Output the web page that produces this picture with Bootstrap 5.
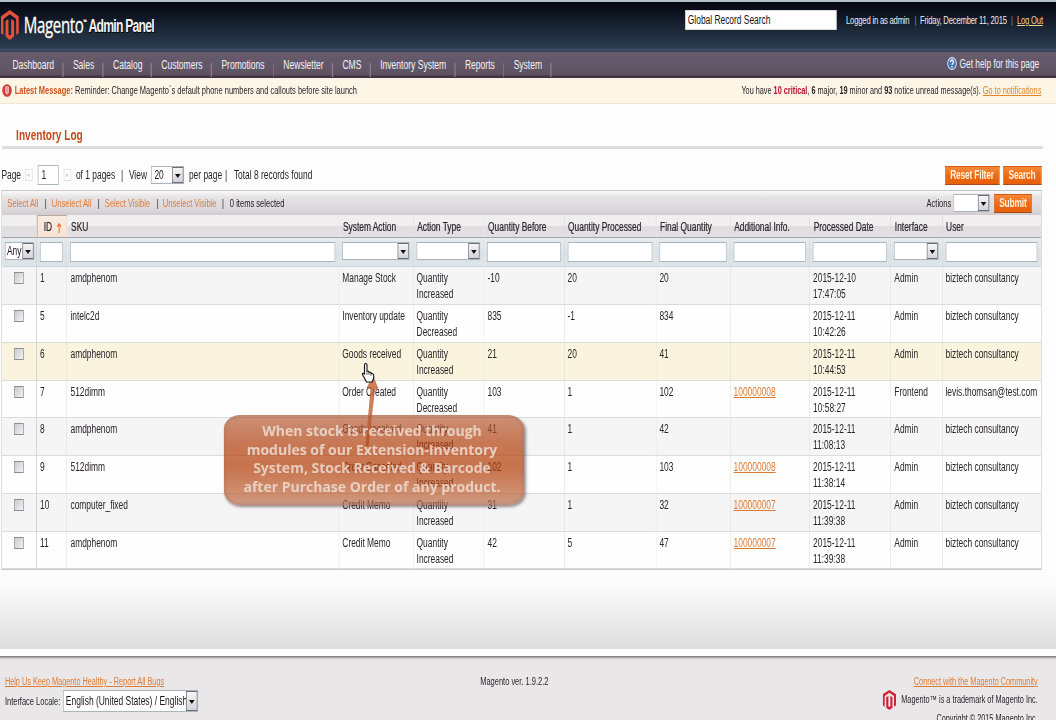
<!DOCTYPE html>
<html lang="en">
<head>
<meta charset="utf-8">
<title>Inventory Log / Magento Admin</title>
<link href="https://cdn.jsdelivr.net/npm/bootstrap@5.3.0/dist/css/bootstrap.min.css" rel="stylesheet">
<style>
body{margin:0;background:#fdfdfd;overflow:hidden}
.stage{width:1056px;height:720px;overflow:hidden}
/* the admin pages are laid out wide and shown condensed */
.squeeze{width:1508.6px;height:720px;transform:scaleX(.7);transform-origin:0 0;font:12px/16.5px "Liberation Sans",Arial,sans-serif;color:#2b2429;white-space:nowrap;overflow:hidden}
.squeeze a{color:#dc7a33}
.top-band{height:52px;background:linear-gradient(#b4c0cb 0 1.5px,#060812 2px,#0b101c 12px,#1a2635 28px,#2b3b50 48px,#47566a 50px,#25324a 51px,#56566a 52px);color:#eee}
.brand-mark{width:26px;height:30px;margin:2px 0 0 1px}
.brand-name{font:21.5px/26px "Open Sans",sans-serif;color:#fff;margin-left:7px;letter-spacing:-.5px;-webkit-text-stroke:.3px #fff}
.brand-sub{font:bold 17.5px/26px "Liberation Sans",sans-serif;color:#f2f2f4;letter-spacing:-1.15px;margin-left:3px;padding-top:1px;text-shadow:1px 1px #000}
.global-box{width:216px;height:20px;background:#fff;color:#161218;border:1px solid #d8d8d8;line-height:18px;padding-left:3px;margin-right:14px}
.session{font-size:11px;letter-spacing:-.3px;width:300px}
.session a{color:#f0cf90}
.menu-band{height:26px;background:linear-gradient(#655b6b,#62586a 50%,#5f505e 88%,#3f3440 94%,#3f3440);color:#f4f2f5;font-size:12.2px;padding-left:4px}
.menu-band .entry{padding:0 13.2px 0 13.7px;position:relative;line-height:26px}
.menu-band .entry::after{content:"";position:absolute;right:0;top:11px;bottom:1px;width:1.4px;background:#857a88}
.note-band{height:26px;background:#fdf5e6;border-bottom:1.5px solid #efe8d6;font-size:10.7px;padding:0 21px 0 0}
.note-band b.hot{color:#cf5420}
.page-title{font:bold 14.4px/20px "Liberation Sans",sans-serif;color:#c44a1c;margin:21px 0 0 23px}
.rule{height:3.2px;background:#dcdcdc;margin:1px 20px 0 3px}
.pager{height:22px;margin-top:15px;padding-right:21px}
.pager-grid{display:grid;grid-template-columns:33.6px 18.6px 54.3px 64.3px 11.4px 31.4px 54.3px 51.4px 12.9px auto;align-items:center;padding-left:2px;line-height:20px}
.step-btn{flex:none;width:11px;height:12px;border:1px solid #e2e2e2;color:#ccc;font-size:7px;line-height:10px;text-align:center}
.field{background:#fff;border:1.2px solid #a9b5bb;height:20px}
.pick{background:#fff;border:1px solid #aab4bc;height:18px;display:flex;align-items:stretch;justify-content:space-between;color:#1d171d}
.pick i{flex:none;margin-left:auto;width:16px;border:1.3px solid #6c6c76;background:linear-gradient(#f7f7f9,#d2d2d8);display:flex;align-items:center;justify-content:center}
.pick i::after{content:"";border:4px solid transparent;border-top:4.5px solid #111;border-bottom:0;margin-top:2px}
.pick span{min-width:0;overflow:hidden}
.act{background:linear-gradient(#f58a3c,#ee6c14 45%,#e75f09);border:1px solid #d9590f;border-bottom-color:#a84a18;color:#fff1e0;font-weight:bold;height:19px;line-height:17px;text-align:center;letter-spacing:-.25px}
.grid-box{margin:4px 21px 0 2px;width:1486px}
.mass{height:25px;border:1px solid #c9c9c9;border-width:1px 1.4px 0;background:linear-gradient(#fafafa,#e6e3e5 25%,#dad6d9 80%,#cfcbce);font-size:10.8px}
.mass-grid{display:grid;grid-template-columns:53.6px 10px 65.7px 10px 74.3px 8.6px 84.3px 11.4px auto;padding-left:7.5px;color:#1d171d}
.mass a{text-decoration:none;color:#e07a38}
.log{table-layout:fixed;width:100%;border-collapse:separate;border-spacing:0;border:1.4px solid #c6c9cc;border-width:0 1.4px 1.4px}
.log th,.log td{padding:0 0 0 4.2px;vertical-align:top;border-right:1.4px solid #dfe0e2;overflow:hidden}
.log th:last-child,.log td:last-child{border-right:0}
.log th{height:23px;font-weight:normal;-webkit-text-stroke:.2px #2b2429;padding:4px 0 0 5px;background:linear-gradient(#f1eff0,#f0eeef 48%,#dfdddf 50%,#e2e0e2);border-right-color:#d2d0d3;border-bottom:1.5px solid #a5a3a8}
.log th.sorted{background:linear-gradient(#f9ebe0,#f8e3d4);border-left:1.4px solid #b8a8a0;border-top:1px solid #b8a8a0;padding-top:3px}
.log .filters td{height:29px;background:linear-gradient(#e6ebee,#dbe2e6 60%,#dde5e8);border-right-color:#c8d0d4;border-bottom:1px solid #cfd6d9;padding:4px 5px 0 4px}
.log .rec td{height:38px;padding-top:3px;border-bottom:1px solid #dadbdd;background:#fefefe;line-height:16px}
.log .rec:nth-child(even) td{background:#f5f5f5}
.log .rec:nth-child(4) td{background:#faf3dd}
.log .rec:nth-child(5) td,.log .rec:nth-child(9) td{height:37px}
.log .rec td:first-child,.log .filters td:first-child{border-right-color:#bcc0c5}
.tick{appearance:none;display:block;width:14px;height:12px;border:1.3px solid #8d8d95;background:linear-gradient(135deg,#c9c9cf,#f3f3f5);margin:2px 0 0 13px}
.fade-end{height:79px;background:linear-gradient(#fdfdfd 0,#fbfbfb 20%,#e9e8e9 72%,#dfdedf 100%)}
.foot{margin-top:7px;height:64px;background:linear-gradient(#858389 0 1px,#c9c7c9 2px,#e9e7e8 4px);padding:17px 26px 0 7px;font-size:10.45px}
.foot .side{width:33.33%}
.foot .line-txt{line-height:18.5px}
.balloon{position:absolute;left:224px;top:415px;width:300px;height:90px;border-radius:17px/14px;background:linear-gradient(rgba(182,96,62,.68),rgba(180,66,14,.7) 32%,rgba(176,58,4,.71) 58%,rgba(186,92,46,.68) 88%,rgba(180,106,76,.65));box-shadow:inset 0 0 4px rgba(160,110,90,.7),1.5px 2px 3px rgba(90,70,70,.6);font:bold 14px/18.6px "Open Sans",sans-serif;color:rgba(236,220,210,.86);text-align:center;padding-top:7px;padding-right:4px;white-space:nowrap}
.pointer-art{position:absolute;left:350px;top:355px}
</style>
</head>
<body>
<svg width="0" height="0" class="position-absolute"><defs>
<symbol id="mage" viewBox="0 0 20 30" preserveAspectRatio="none"><path d="M10 0 20 6.5V23l-3 2V9L10 4.3 3 9v16l-3-2V6.5z"/><path d="M5.3 11 8.5 9v15.5l1.5 1 1.5-1V9l3.2 2v15.5L10 30l-4.7-3.5z"/></symbol>
</defs></svg>
<div class="stage position-relative">
<div class="squeeze">
  <header class="top-band d-flex justify-content-between">
    <div class="d-flex align-items-start pt-2">
      <svg class="brand-mark" style="fill:#e5503a"><use href="#mage"/></svg>
      <span class="brand-name mt-1">Magento<sup style="font-size:6px;top:-9px">™</sup></span><span class="brand-sub mt-1">Admin Panel</span>
    </div>
    <div class="d-flex" style="padding-top:10px">
      <div class="global-box">Global Record Search</div>
      <div class="session d-flex align-items-center" style="height:20px"><span style="width:98px">Logged in as admin</span><span class="opacity-50">|</span><span style="margin-left:5px;width:130px">Friday, December 11, 2015</span><span class="opacity-50">|</span><a href="#" style="margin-left:6px">Log Out</a></div>
    </div>
  </header>
  <nav class="menu-band d-flex">
    <span class="entry">Dashboard</span><span class="entry">Sales</span><span class="entry">Catalog</span><span class="entry">Customers</span><span class="entry">Promotions</span><span class="entry">Newsletter</span><span class="entry">CMS</span><span class="entry">Inventory System</span><span class="entry">Reports</span><span class="entry">System</span>
    <span class="ms-auto d-flex align-items-center" style="margin-right:24px;font-size:11.9px;line-height:22px;height:23px"><svg width="14" height="13" viewBox="0 0 14 13" preserveAspectRatio="none" style="margin-right:4px"><ellipse cx="7" cy="6.5" rx="6.2" ry="5.8" fill="#4877b8" stroke="#d8e4f6" stroke-width="1.3"/><path d="M4.8 5C5 2.4 9.3 2.6 9.1 5 9 6.500 7 6.200 7 8M7 9v1.600" fill="none" stroke="#fff" stroke-width="1.600"/></svg>Get help for this page</span>
  </nav>
  <div class="note-band d-flex align-items-center">
    <svg width="14" height="13" viewBox="0 0 14 13" preserveAspectRatio="none" style="margin:0 4px 0 3px"><ellipse cx="7" cy="6.5" rx="6.8" ry="6.3" fill="#cf3b35"/><path d="M5 2.5v6q2 3 4 0v-6" fill="none" stroke="#f6d0c8" stroke-width="1.2"/><path d="M7 2v7" stroke="#fff" stroke-width="1.4"/></svg>
    <span><b class="hot">Latest Message:</b> Reminder: Change Magento`s default phone numbers and callouts before site launch</span>
    <span class="ms-auto" style="font-size:10.45px;padding-top:1px">You have <b style="color:#b8102c">10 critical</b>, <b>6</b> major, <b>19</b> minor and <b>93</b> notice unread message(s). <a href="#" style="color:#e0862c">Go to notifications</a></span>
  </div>
  <h1 class="page-title">Inventory Log</h1>
  <div class="rule"></div>
  <div class="pager d-flex justify-content-between align-items-center">
    <div class="pager-grid"><span>Page</span><span class="step-btn">◂</span><span class="d-flex align-items-center" style="gap:7px"><span class="field ps-1" style="width:30px;line-height:18px">1</span><span class="step-btn">▸</span></span><span>of 1 pages</span><span>|</span><span>View</span><span class="pick ps-1" style="width:47px;line-height:16px">20<i></i></span><span>per page</span><span>|</span><span>Total 8 records found</span></div>
    <div class="d-flex" style="gap:5px"><div class="act" style="width:78px">Reset Filter</div><div class="act" style="width:55px">Search</div></div>
  </div>
  <div class="grid-box">
    <div class="mass d-flex justify-content-between align-items-center">
      <div class="mass-grid"><a href="#">Select All</a><span>|</span><a href="#">Unselect All</a><span>|</span><a href="#">Select Visible</a><span>|</span><a href="#">Unselect Visible</a><span>|</span><span>0 items selected</span></div>
      <div class="d-flex align-items-center" style="padding-right:13px"><span style="margin-right:3px">Actions</span><span class="pick" style="width:52px"><i></i></span><div class="act" style="width:54px;margin-left:6px;font-size:12px">Submit</div></div>
    </div>
    <table class="log">
      <colgroup><col style="width:3.37%"><col style="width:2.93%"><col style="width:26.17%"><col style="width:7.15%"><col style="width:6.83%"><col style="width:7.7%"><col style="width:8.85%"><col style="width:7.14%"><col style="width:7.65%"><col style="width:7.82%"><col style="width:4.93%"><col></colgroup>
      <thead><tr><th></th><th class="sorted">&nbsp;ID&nbsp; <svg width="7" height="10" viewBox="0 0 7 10"><path d="M3.500 10V1M.8 3.800 3.500 .8 6.200 3.800" fill="none" stroke="#e8702a" stroke-width="1.500"/></svg></th><th>SKU</th><th>System Action</th><th>Action Type</th><th>Quantity Before</th><th>Quantity Processed</th><th>Final Quantity</th><th>Additional Info.</th><th>Processed Date</th><th>Interface</th><th>User</th></tr></thead>
      <tbody id="entries">
        <tr class="filters"><td><div class="pick" style="padding-left:2px;line-height:16px;margin-right:-2px">Any<i></i></div></td><td><div class="field"></div></td><td><div class="field"></div></td><td><div class="pick"><i></i></div></td><td><div class="pick"><i></i></div></td><td><div class="field"></div></td><td><div class="field"></div></td><td><div class="field"></div></td><td><div class="field"></div></td><td><div class="field"></div></td><td><div class="pick"><i></i></div></td><td><div class="field"></div></td></tr>
      </tbody>
    </table>
  </div>
  <div class="fade-end"></div>
  <footer class="foot d-flex">
    <div class="side"><div style="padding-top:1px;line-height:16px"><a href="#">Help Us Keep Magento Healthy - Report All Bugs</a></div>
      <div class="d-flex align-items-center" style="font-size:10.7px">Interface Locale:<span class="pick" style="width:193px;height:22px;margin-left:4px;padding-left:3px;font-size:12.1px;line-height:20px"><span>English (United States) / English</span><i></i></span></div></div>
    <div class="side text-center" style="font-size:10.7px;padding-right:20px">Magento ver. 1.9.2.2</div>
    <div class="side d-flex flex-column align-items-end line-txt"><a href="#" style="line-height:17px">Connect with the Magento Community</a>
      <div class="d-flex align-items-center"><svg width="19" height="20" style="fill:#cf2233;margin-right:8px"><use href="#mage"/></svg>Magento™ is a trademark of Magento Inc.</div><div>Copyright © 2015 Magento Inc.</div></div>
  </footer>
</div>
<svg class="pointer-art" width="40" height="100" viewBox="0 0 40 100">
  <path d="M15.500 91 20.500 34 16.500 33 23 20 29 35 25 34.500 18.500 91z" fill="#bf5f30" opacity=".8"/>
  <path d="M14.500 19V10q0-1.500 1.200-1.500T17 10v6l1.500.2.3 1 2 .1.200 1 1.700.4q1 .5 1 2v2.500L22 27H16.500L12.500 19.500q-.3-1.500 1-1.200z" fill="#fff" stroke="#111" stroke-width="1.100"/>
  <path d="M17 16v4M19 17v3M21 18v3" stroke="#111" stroke-width=".6"/>
</svg>
<div class="balloon">When stock is received through<br>modules of our Extension-Inventory<br>System, Stock Received &amp; Barcode<br>after Purchase Order of any product.</div>
</div>
<script>
const records = [
 [1,'amdphenom','Manage Stock','Increased','-10','20','20','','2015-12-10','17:47:05','Admin'],
 [5,'intelc2d','Inventory update','Decreased','835','-1','834','','2015-12-11','10:42:26','Admin'],
 [6,'amdphenom','Goods received','Increased','21','20','41','','2015-12-11','10:44:53','Admin'],
 [7,'512dimm','Order Created','Decreased','103','1','102','100000008','2015-12-11','10:58:27','Frontend'],
 [8,'amdphenom','Goods received','Increased','41','1','42','','2015-12-11','11:08:13','Admin'],
 [9,'512dimm','Order Canceled','Increased','102','1','103','100000008','2015-12-11','11:38:14','Admin'],
 [10,'computer_fixed','Credit Memo','Increased','31','1','32','100000007','2015-12-11','11:39:38','Admin'],
 [11,'amdphenom','Credit Memo','Increased','42','5','47','100000007','2015-12-11','11:39:38','Admin']
];
document.getElementById('entries').insertAdjacentHTML('beforeend', records.map(r => `<tr class="rec"><td><input type="checkbox" class="tick"></td><td>${r[0]}</td><td>${r[1]}</td><td>${r[2]}</td><td>Quantity<br>${r[3]}</td><td>${r[4]}</td><td>${r[5]}</td><td>${r[6]}</td><td>${r[7] ? `<a href="#">${r[7]}</a>` : ''}</td><td>${r[8]}<br>${r[9]}</td><td>${r[10]}</td><td>${r[0] === 7 ? 'levis.thomsan@test.com' : 'biztech consultancy'}</td></tr>`).join(''));
</script>
<script src="https://cdn.jsdelivr.net/npm/bootstrap@5.3.0/dist/js/bootstrap.bundle.min.js"></script>
</body>
</html>
